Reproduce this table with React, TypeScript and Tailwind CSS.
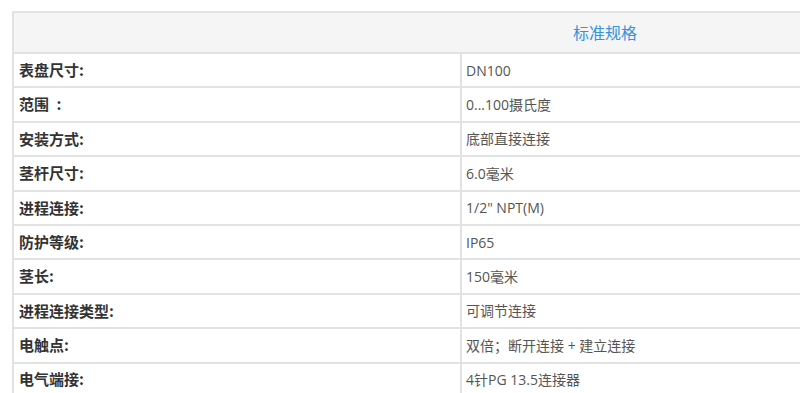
const specs: [string, string][] = [
  ["表盘尺寸:", "DN100"],
  ["范围\u2002:", "0...100摄氏度"],
  ["安装方式:", "底部直接连接"],
  ["茎杆尺寸:", "6.0毫米"],
  ["进程连接:", "1/2\" NPT(M)"],
  ["防护等级:", "IP65"],
  ["茎长:", "150毫米"],
  ["进程连接类型:", "可调节连接"],
  ["电触点:", "双倍；断开连接 + 建立连接"],
  ["电气端接:", "4针PG 13.5连接器"],
];

const App = () => {
  return (
    <div className="w-[800px] h-[393px] overflow-hidden bg-white">
      <div className="pt-[11px] pl-[12px]">
        <table className="w-[1186px] border-collapse border-2 border-[#e2e2e2] font-['Open_Sans','Noto_Sans_CJK_SC',sans-serif]">
          <thead>
            <tr className="h-[41px] bg-[#f5f5f5]">
              <th
                colSpan={2}
                className="border-2 border-[#e2e2e2] text-center font-normal text-[16px] text-[#3393dd]"
              >
                标准规格
              </th>
            </tr>
          </thead>
          <tbody>
            {specs.map(([label, value]) => (
              <tr key={label} className="h-[34.4px]">
                <td className="w-[448px] border-2 border-[#e2e2e2] pl-[5px] text-[15px] font-bold text-[#333333] font-['Noto_Sans_CJK_SC',sans-serif]">
                  {label}
                </td>
                <td className="border-2 border-[#e2e2e2] pl-[4px] text-[14px] text-[#555555]">
                  {value}
                </td>
              </tr>
            ))}
          </tbody>
        </table>
      </div>
    </div>
  );
};

export default App;
